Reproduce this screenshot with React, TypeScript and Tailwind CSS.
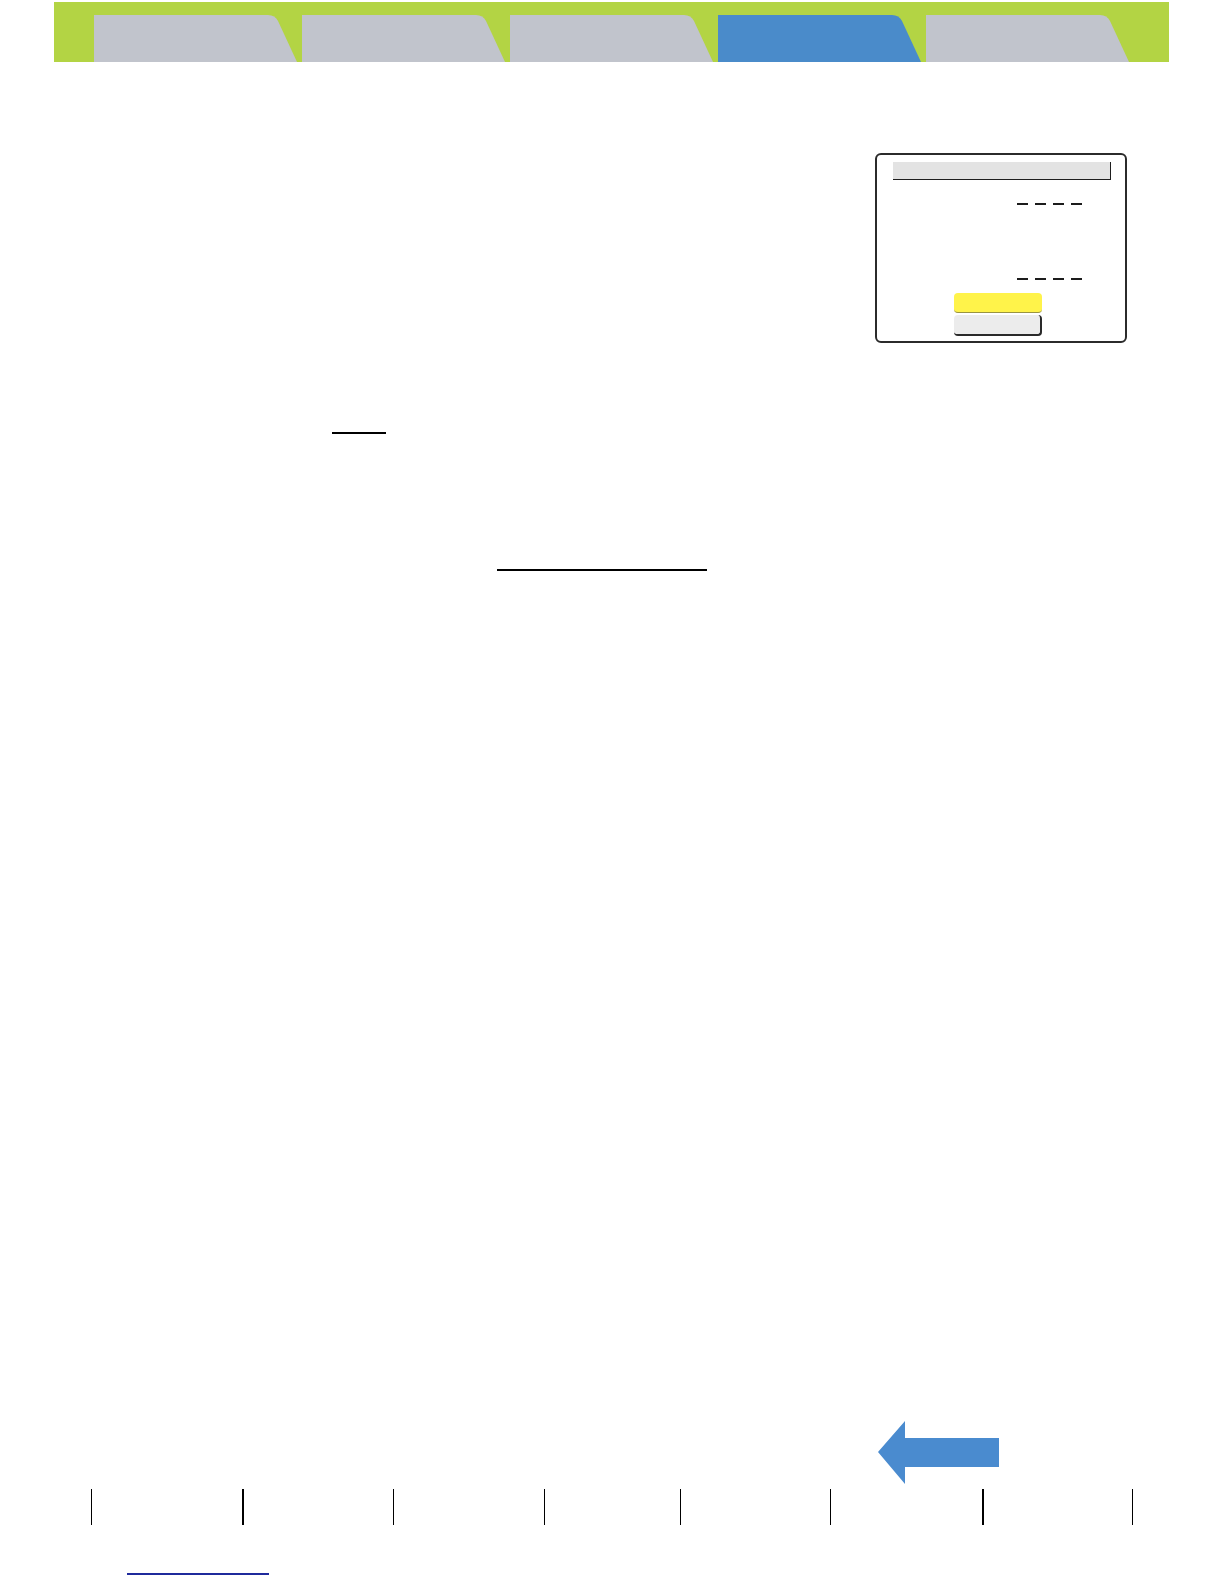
import React from "react";

const tabs = [false, false, false, true, false];

function Tab({ active }: { active: boolean }) {
  return (
    <div className="w-[203px] h-[47px] shrink-0">
      <svg width="203" height="47" viewBox="0 0 203 47" className="block">
        <path
          d="M0 0 H174 Q181 0 184 6 L203 47 H0 Z"
          fill={active ? "#4a8bca" : "#c1c4cc"}
        />
      </svg>
    </div>
  );
}

function Dashes() {
  return (
    <div className="flex gap-[7px] ml-[140px]">
      {[0, 1, 2, 3].map((i) => (
        <div key={i} className="w-[11px] h-[2px] bg-[#1c1c1c]" />
      ))}
    </div>
  );
}

function Dialog() {
  return (
    <div className="ml-[875px] mt-[91px] w-[252px] h-[190px] border-2 border-[#2b2b2b] rounded-[6px] flex flex-col">
      <div className="ml-[16px] mt-[7px] w-[218px] h-[18px] bg-[#e3e3e3] border-b-[1.5px] border-r-[1.5px] border-[#1e1e1e]" />
      <div className="mt-[23px]">
        <Dashes />
      </div>
      <div className="mt-[73px]">
        <Dashes />
      </div>
      <div className="ml-[77px] mt-[13px] w-[88px] h-[20px] bg-[#fff34a] rounded-[4px] border-b border-[#9a9440]" />
      <div className="ml-[77px] mt-[2px] w-[88px] h-[21px] bg-[#ececec] rounded-[4px] border-b-2 border-r-2 border-[#2a2a2a]" />
    </div>
  );
}

const lines = [
  { x: 91, w: 1 },
  { x: 242, w: 2 },
  { x: 393, w: 1 },
  { x: 544, w: 1 },
  { x: 680, w: 1 },
  { x: 830, w: 1 },
  { x: 982, w: 2 },
  { x: 1132, w: 1 },
];

export default function App() {
  return (
    <div className="w-[1224px] h-[1584px] bg-white flex flex-col overflow-hidden">
      {/* top tab bar */}
      <div className="ml-[54px] mt-[2px] w-[1115px] h-[60px] bg-[#b3d444] flex items-end pl-[40px] gap-[5px]">
        {tabs.map((a, i) => (
          <Tab key={i} active={a} />
        ))}
      </div>

      <Dialog />

      <div className="ml-[332px] mt-[89px] w-[54px] h-[2px] bg-black" />
      <div className="ml-[497px] mt-[135px] w-[210px] h-[2px] bg-black" />

      {/* footer */}
      <div className="mt-auto flex flex-col">
        <div className="ml-[878px]">
          <svg width="121" height="63" viewBox="0 0 121 63" className="block">
            <path d="M0 31 L27 0 V17 H121 V46 H27 V63 Z" fill="#4a8bcf" />
          </svg>
        </div>
        <div className="relative mt-[5px] h-[36px]">
          {lines.map((l) => (
            <div
              key={l.x}
              className="absolute top-0 h-[36px] bg-black"
              style={{ left: l.x, width: l.w }}
            />
          ))}
        </div>
        <div className="ml-[127px] mt-[48px] mb-[9px] w-[142px] h-[2px] bg-[#1f2a9c]" />
      </div>
    </div>
  );
}
